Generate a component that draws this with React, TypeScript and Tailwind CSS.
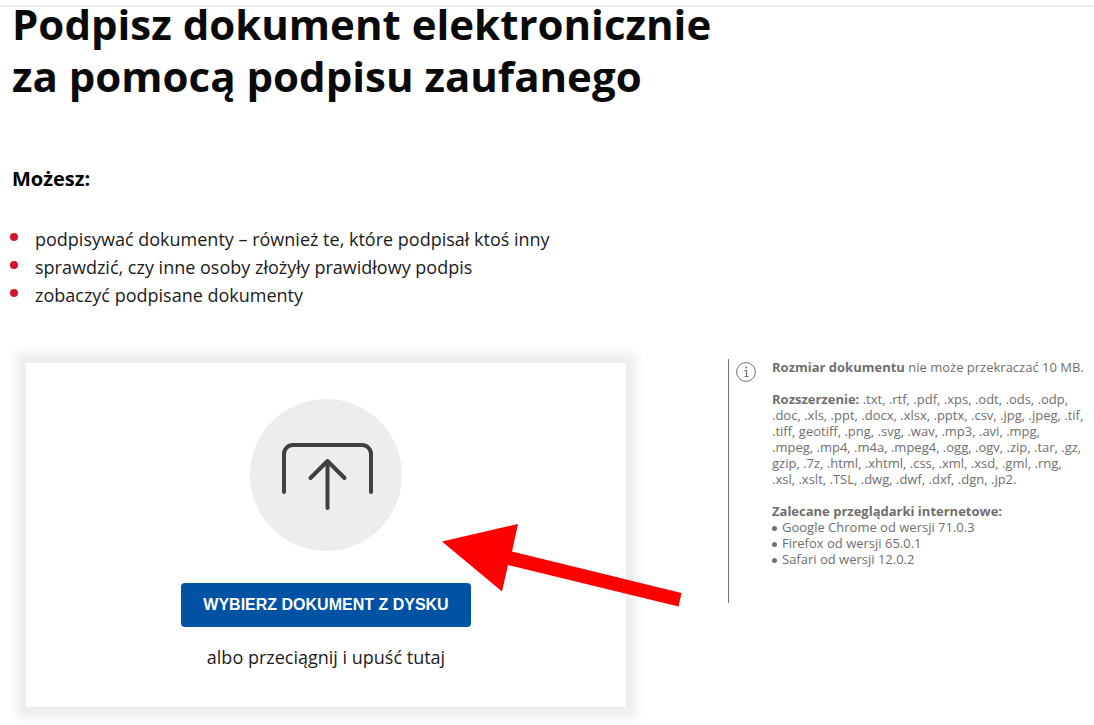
import React from 'react';

const features = [
  'podpisywać dokumenty – również te, które podpisał ktoś inny',
  'sprawdzić, czy inne osoby złożyły prawidłowy podpis',
  'zobaczyć podpisane dokumenty',
];

const browsers = [
  'Google Chrome od wersji 71.0.3',
  'Firefox od wersji 65.0.1',
  'Safari od wersji 12.0.2',
];

const UploadIcon = () => (
  <svg
    viewBox="0 0 152 152"
    className="size-38"
    fill="none"
    stroke="#404041"
    strokeWidth="4"
    strokeLinecap="round"
    strokeLinejoin="round"
    aria-hidden="true"
  >
    <circle cx="76" cy="76" r="76" fill="#ededed" stroke="none" />
    <path d="M34 93V55a9 9 0 0 1 9-9h69a9 9 0 0 1 9 9v38" />
    <path d="M77.5 109V62M60.5 79l17-17 17 17" />
  </svg>
);

const InfoIcon = () => (
  <svg viewBox="0 0 20 20" className="mt-[3px] size-5 shrink-0" fill="none" stroke="#6f6f6f" aria-hidden="true">
    <circle cx="10" cy="10" r="9.4" />
    <path d="M8.5 8.5h2V14M8.5 14.5h4" strokeWidth="1.2" />
    <circle cx="10.2" cy="5.5" r="1" fill="#6f6f6f" stroke="none" />
  </svg>
);

const DropZone = () => (
  <div className="relative h-[344px] w-[600px] shrink-0 bg-white shadow-[0_0_10px_10px_#ededed]">
    <div className="flex flex-col items-center pt-9">
      <UploadIcon />
      <button
        type="button"
        className="mt-8 h-11 rounded bg-[#0052a5] px-[22px] font-['Liberation_Sans',sans-serif] text-base font-bold text-white"
      >
        WYBIERZ DOKUMENT Z DYSKU
      </button>
      <p className="mt-4 text-lg leading-7">albo przeciągnij i upuść tutaj</p>
    </div>

    <svg viewBox="0 0 240 84" className="absolute top-40 left-104 h-21 w-60" aria-hidden="true">
      <path d="M0 18.5 76 1 70 28.5 239.5 70 236.5 83.5 66 42 60 68.5Z" fill="#ff0000" />
    </svg>
  </div>
);

const InfoPanel = () => (
  <aside className="-mt-1 flex h-61 min-w-0 flex-1 border-l border-[#6f6f6f] pl-[7px] text-[#6f6f6f]">
    <InfoIcon />
    <div className="ml-4 text-[13px] leading-4">
      <p>
        <strong>Rozmiar dokumentu</strong> nie może przekraczać 10 MB.
      </p>
      <p className="mt-4 pr-2">
        <strong>Rozszerzenie:</strong> .txt, .rtf, .pdf, .xps, .odt, .ods, .odp, .doc, .xls, .ppt, .docx,
        .xlsx, .pptx, .csv, .jpg, .jpeg, .tif, .tiff, geotiff, .png, .svg, .wav, .mp3, .avi, .mpg,
        <br />
        .mpeg, .mp4, .m4a, .mpeg4, .ogg, .ogv, .zip, .tar, .gz, gzip, .7z, .html, .xhtml, .css, .xml, .xsd,
        .gml, .rng, .xsl, .xslt, .TSL, .dwg, .dwf, .dxf, .dgn, .jp2.
      </p>
      <p className="mt-4 font-bold">Zalecane przeglądarki internetowe:</p>
      <ul>
        {browsers.map((name) => (
          <li key={name} className="flex items-center gap-[5px]">
            <span className="mt-0.5 size-[5px] rounded-full bg-[#6f6f6f]"></span>
            {name}
          </li>
        ))}
      </ul>
    </div>
  </aside>
);

const App = () => {
  return (
    <main className="bg-white pt-[5px] font-['Open_Sans',sans-serif] text-[#1b1b1b]">
      <div className="border-t-2 border-[#eeeeee] pl-3">
        <h1 className="-mt-[9px] text-[42px] leading-[52px] font-bold text-[#0a0a0a]">
          Podpisz dokument elektronicznie
          <br />
          za pomocą podpisu zaufanego
        </h1>

        <h2 className="mt-[63px] text-xl leading-7 font-bold text-black">Możesz:</h2>

        <ul className="mt-8 text-lg leading-7">
          {features.map((text) => (
            <li key={text} className="-ml-0.5 flex items-center gap-[17px]">
              <span className="mb-1 size-2 rounded-full bg-[#d5152e]"></span>
              {text}
            </li>
          ))}
        </ul>

        <div className="mt-[54px] flex gap-[102px] pb-4 pl-[14px]">
          <DropZone />
          <InfoPanel />
        </div>
      </div>
    </main>
  );
};

export default App;
